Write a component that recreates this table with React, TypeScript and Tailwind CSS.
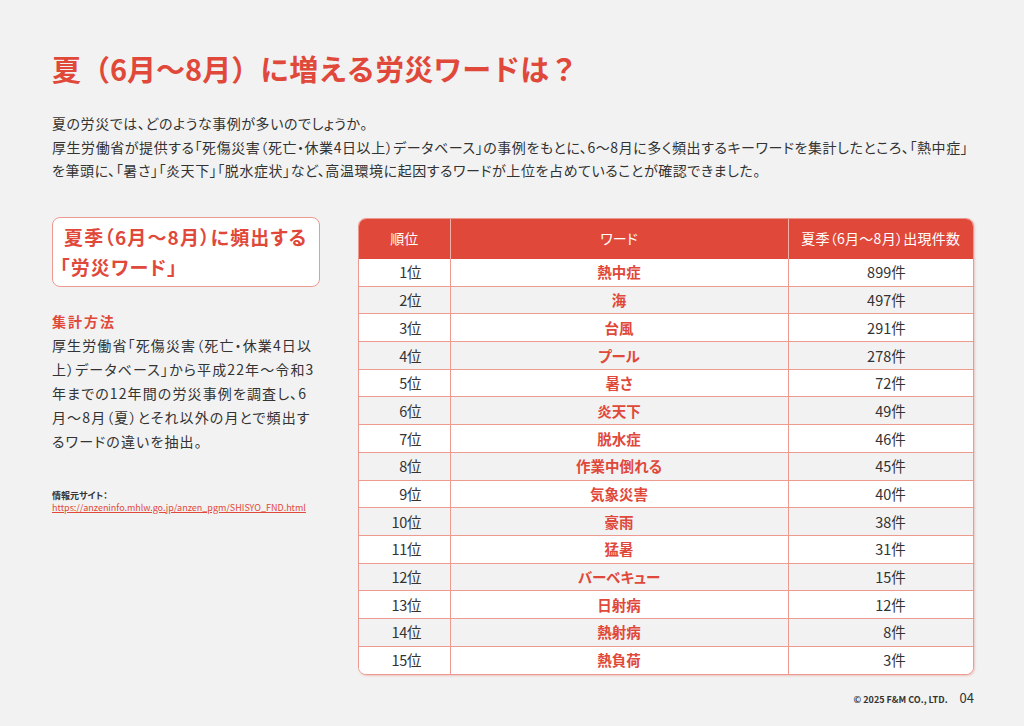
import React from 'react';

const rows = [
  { rank: 1, word: '熱中症', count: 899 },
  { rank: 2, word: '海', count: 497 },
  { rank: 3, word: '台風', count: 291 },
  { rank: 4, word: 'プール', count: 278 },
  { rank: 5, word: '暑さ', count: 72 },
  { rank: 6, word: '炎天下', count: 49 },
  { rank: 7, word: '脱水症', count: 46 },
  { rank: 8, word: '作業中倒れる', count: 45 },
  { rank: 9, word: '気象災害', count: 40 },
  { rank: 10, word: '豪雨', count: 38 },
  { rank: 11, word: '猛暑', count: 31 },
  { rank: 12, word: 'バーベキュー', count: 15 },
  { rank: 13, word: '日射病', count: 12 },
  { rank: 14, word: '熱射病', count: 8 },
  { rank: 15, word: '熱負荷', count: 3 },
];

export default function App() {
  return (
    <div className="w-[1024px] h-[726px] bg-[#f2f2f2] text-[#333] relative overflow-hidden font-['Noto_Sans_CJK_JP','Noto_Sans',sans-serif] [font-feature-settings:'palt']">
      <div className="pl-[52px] pr-[50px] pt-[46px]">
        <h1 className="text-[29px] leading-[44px] font-bold text-[#e0483a] [font-feature-settings:normal]">
          夏（6月〜8月）に増える労災ワードは？
        </h1>

        {/* Intro */}
        <div className="mt-[22px] text-[14px] leading-[23.5px] tracking-[0.04em] text-[#333] whitespace-nowrap">
          <p>夏の労災では、どのような事例が多いのでしょうか。</p>
          <p>
            厚生労働省が提供する「死傷災害（死亡・休業4日以上）データベース」の事例をもとに、6〜8月に多く頻出するキーワードを集計したところ、「熱中症」
          </p>
          <p>を筆頭に、「暑さ」「炎天下」「脱水症状」など、高温環境に起因するワードが上位を占めていることが確認できました。</p>
        </div>

        <div className="mt-[34px] flex gap-[38px]">
          {/* Left column */}
          <div className="w-[268px] shrink-0">
            <div className="bg-white border border-[#ec9a90] rounded-[8px] px-[11px] py-[4px] text-[19px] leading-[30px] font-bold text-[#e0483a] tracking-[0.06em] whitespace-nowrap">
              <p>夏季（6月〜8月）に頻出する</p>
              <p className="-ml-[4px]">「労災ワード」</p>
            </div>

            <h2 className="mt-[22px] text-[14px] leading-[24px] font-bold text-[#e0483a] tracking-[0.14em]">集計方法</h2>
            <div className="text-[14px] leading-[24px] tracking-[0.08em] text-[#333] whitespace-nowrap">
              <p>厚生労働省「死傷災害（死亡・休業4日以</p>
              <p>上）データベース」から平成22年〜令和3</p>
              <p>年までの12年間の労災事例を調査し、6</p>
              <p>月〜8月（夏）とそれ以外の月とで頻出す</p>
              <p>るワードの違いを抽出。</p>
            </div>

            <div className="mt-[37px] text-[9px] leading-[12px]">
              <p className="font-bold text-[#333]">情報元サイト：</p>
              <p className="text-[#e0483a] underline">https://anzeninfo.mhlw.go.jp/anzen_pgm/SHISYO_FND.html</p>
            </div>
          </div>

          {/* Table */}
          <div className="w-[616px] mt-[1px] rounded-[8px] overflow-hidden border border-[#ec9a90] shadow-[1px_1px_2px_rgba(224,72,58,0.25)] bg-white">
            <table className="w-full border-collapse text-[14.5px]">
              <thead>
                <tr className="bg-[#e0483a] text-white h-[40px] text-[14px]">
                  <th className="w-[91px] font-normal border-r border-[#f3b1a8]">順位</th>
                  <th className="w-[338px] font-normal border-r border-[#f3b1a8]">ワード</th>
                  <th className="font-normal tracking-[0.02em]">夏季（6月〜8月）出現件数</th>
                </tr>
              </thead>
              <tbody>
                {rows.map((r, i) => (
                  <tr
                    key={r.rank}
                    className={`h-[27.7px] ${i % 2 === 0 ? 'bg-white' : 'bg-[#f2f2f2]'} ${i < rows.length - 1 ? 'border-b border-[#ef9a8e]' : ''}`}
                  >
                    <td className="border-r border-[#ef9a8e] text-center p-0">
                      <span className="inline-block w-[36px] text-right mr-[2px] tracking-[-0.02em]">{r.rank}位</span>
                    </td>
                    <td className="border-r border-[#ef9a8e] text-center font-bold text-[#e0483a] p-0">{r.word}</td>
                    <td className="text-center p-0">
                      <span className="inline-block w-[46px] ml-[4px] text-right">{r.count}件</span>
                    </td>
                  </tr>
                ))}
              </tbody>
            </table>
          </div>
        </div>
      </div>

      {/* Footer */}
      <div className="absolute right-[50px] bottom-[19px] flex items-baseline gap-[12px]">
        <span className="text-[9px] font-bold text-[#333]">© 2025 F&amp;M CO., LTD.</span>
        <span className="text-[13px] text-[#333]">04</span>
      </div>
    </div>
  );
}
